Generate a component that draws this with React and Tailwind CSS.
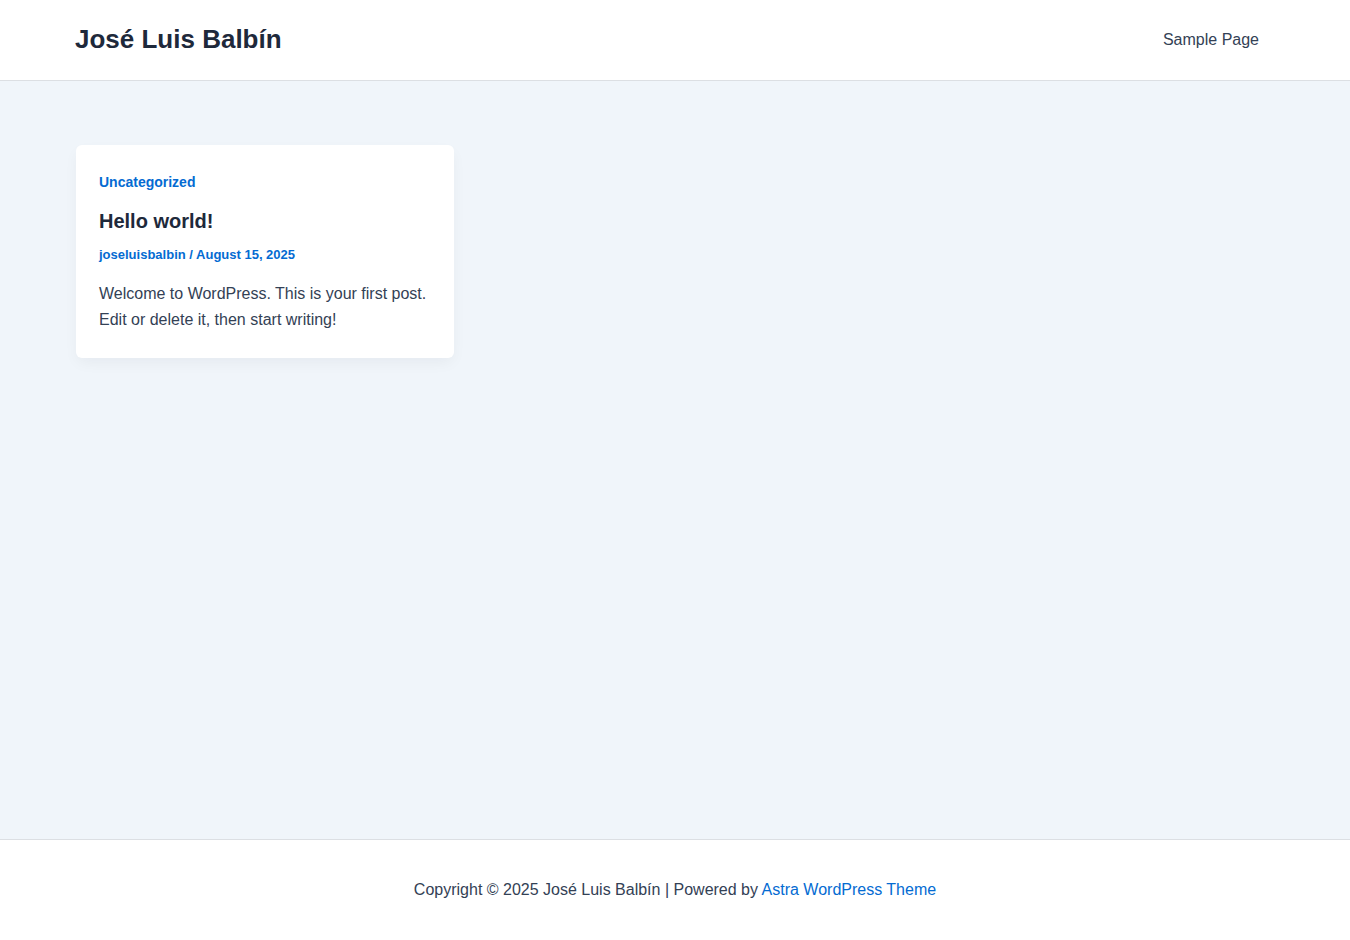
import React from 'react';

export default function App() {
  return (
    <div className="min-h-[940px] flex flex-col bg-[#f0f5fa] text-[#334155]" style={{ fontFamily: '"Liberation Sans", Arial, sans-serif' }}>
      <header className="h-[81px] bg-white border-b border-[#dcdfe3] flex items-center justify-between pl-[75px] pr-[91px]">
        <a href="#" className="mb-[2px] text-[26px] font-bold text-[#1e293b] leading-none">José Luis Balbín</a>
        <nav>
          <a href="#" className="text-[16px] text-[#334155]">Sample Page</a>
        </nav>
      </header>

      <main className="flex-1 px-[76px] pt-[64px]">
        <article className="w-[378px] bg-white rounded-md shadow-[0_6px_15px_-2px_rgba(16,24,40,0.05)] px-[23px] pt-[27px] pb-[25px]">
          <a href="#" className="block text-[14px] font-bold text-[#046bd2] leading-[20px]">Uncategorized</a>
          <h2 className="mt-[17px] text-[20px] font-bold text-[#1e293b] leading-[24px]">Hello world!</h2>
          <div className="mt-[12px] text-[13px] font-bold text-[#046bd2] leading-[20px]">
            <a href="#">joseluisbalbin</a> / <span>August 15, 2025</span>
          </div>
          <p className="mt-[16px] text-[16px] leading-[26px]">
            Welcome to WordPress. This is your first post. Edit or delete it, then start writing!
          </p>
        </article>
      </main>

      <footer className="h-[101px] bg-white border-t border-[#dcdfe3] flex items-center justify-center">
        <p className="text-[16px] text-[#334155]">
          Copyright © 2025 José Luis Balbín | Powered by <a href="#" className="text-[#046bd2]">Astra WordPress Theme</a>
        </p>
      </footer>
    </div>
  );
}
